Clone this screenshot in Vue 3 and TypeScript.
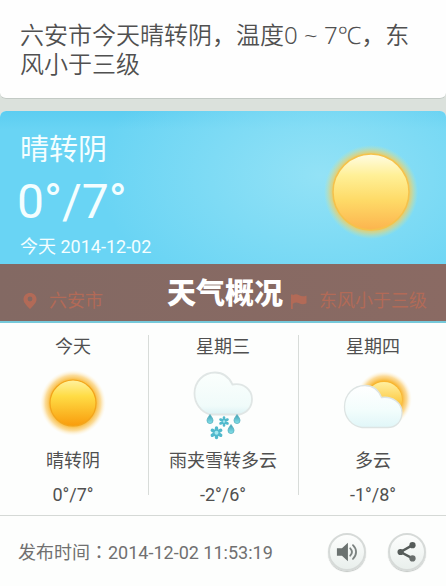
<script setup lang="ts">
type Sky = 'sun' | 'sleet' | 'cloudy'

interface Forecast {
  day: string
  sky: Sky
  text: string
  range: string
}

const summary = '六安市今天晴转阴，温度0 ~ 7℃，东风小于三级'

const forecasts: Forecast[] = [
  { day: '今天', sky: 'sun', text: '晴转阴', range: '0°/7°' },
  { day: '星期三', sky: 'sleet', text: '雨夹雪转多云', range: '-2°/6°' },
  { day: '星期四', sky: 'cloudy', text: '多云', range: '-1°/8°' },
]
</script>

<template>
  <main class="page">
    <p class="summary">{{ summary }}</p>

    <article class="card">
      <section class="hero">
        <div class="now">
          <h2 class="now-text">晴转阴</h2>
          <p class="now-range">0°/7°</p>
          <p class="now-date">今天 2014-12-02</p>
        </div>
        <svg class="hero-sun" viewBox="0 0 100 100" aria-hidden="true">
          <defs>
            <radialGradient id="heroGlow">
              <stop offset="0.76" stop-color="#f2c748" />
              <stop offset="0.86" stop-color="#e5d276" stop-opacity="0.75" />
              <stop offset="1" stop-color="#c9e6a8" stop-opacity="0" />
            </radialGradient>
            <linearGradient id="heroDisc" x1="0" y1="0" x2="0" y2="1">
              <stop offset="0" stop-color="#fffce4" />
              <stop offset="0.28" stop-color="#fff097" />
              <stop offset="0.6" stop-color="#fedb68" />
              <stop offset="1" stop-color="#fcb44e" />
            </linearGradient>
          </defs>
          <circle cx="50" cy="50" r="47" fill="url(#heroGlow)" />
          <circle cx="50" cy="50" r="38" fill="url(#heroDisc)" stroke="#f5c24c" stroke-width="1.500" />
        </svg>
      </section>

      <header class="band">
        <p class="place">
          <svg class="pin" viewBox="0 0 14 16" aria-hidden="true">
            <path
              fill="currentColor"
              fill-rule="evenodd"
              d="M7 0C3.300 0 .5 2.700.5 6.200.5 9.500 3.500 12.500 7 16c3.500-3.500 6.500-6.500 6.500-9.800C13.500 2.700 10.700 0 7 0Zm0 3.600a2.400 2.400 0 1 1 0 4.800 2.400 2.400 0 0 1 0-4.800Z"
            />
          </svg>
          六安市
        </p>
        <h1 class="title">天气概况</h1>
        <p class="wind">
          <svg class="flag" viewBox="0 0 16 16" aria-hidden="true">
            <path
              fill="currentColor"
              d="M0 1.500h1.800v.8C4 .8 6 .9 8.200 2.200c2.300 1.300 4.600 1.400 7.300.2v7.900c-2.700 1.400-5 1.300-7.300 0-2.200-1.200-4.200-1.200-6.400.4V16H0Z"
            />
          </svg>
          东风小于三级
        </p>
      </header>

      <ul class="days">
        <li v-for="f in forecasts" :key="f.day" class="day">
          <h3 class="day-name">{{ f.day }}</h3>

          <svg v-if="f.sky === 'sun'" class="sky" viewBox="0 0 80 80" aria-hidden="true">
            <defs>
              <radialGradient id="sunGlow">
                <stop offset="0.68" stop-color="#f8b52d" />
                <stop offset="0.84" stop-color="#fbd27c" stop-opacity="0.75" />
                <stop offset="1" stop-color="#fff5dc" stop-opacity="0" />
              </radialGradient>
              <linearGradient id="sunDisc" x1="0" y1="0" x2="0" y2="1">
                <stop offset="0" stop-color="#fff2a0" />
                <stop offset="0.35" stop-color="#ffdc45" />
                <stop offset="1" stop-color="#f99c0c" />
              </linearGradient>
            </defs>
            <circle cx="40" cy="40" r="33" fill="url(#sunGlow)" />
            <circle cx="40" cy="40" r="23" fill="url(#sunDisc)" stroke="#f3a51c" stroke-width="1.200" />
          </svg>

          <svg v-else-if="f.sky === 'sleet'" class="sky" viewBox="0 0 80 80" aria-hidden="true">
            <defs>
              <linearGradient id="sleetCloud" x1="0" y1="0" x2="0" y2="1">
                <stop offset="0" stop-color="#fbfffd" />
                <stop offset="0.8" stop-color="#f0fbfa" />
                <stop offset="1" stop-color="#dcf2f4" />
              </linearGradient>
              <linearGradient id="dropFill" x1="0" y1="0" x2="0" y2="1">
                <stop offset="0" stop-color="#3f9fb3" />
                <stop offset="1" stop-color="#86e3ec" />
              </linearGradient>
            </defs>
            <path
              fill="url(#sleetCloud)"
              stroke="#e0e6e5"
              stroke-width="1.800"
              d="M27 51.500C17.500 48.500 11.500 40 11.500 30.500 11.500 18.500 20.500 9.500 32 9.500c7.800 0 14 4.500 17.500 12C60.500 19.500 69 26.500 69 36c0 8-5 14-12.500 15.500Z"
            />
            <g fill="url(#dropFill)" stroke="#4fabb9" stroke-width="0.700">
              <path d="M27 51.500c2 2.800 3 4.500 3 6.100a3 3 0 0 1-6 0c0-1.600 1-3.300 3-6.100Z" />
              <path d="M54 51.500c2 2.800 3 4.500 3 6.100a3 3 0 0 1-6 0c0-1.600 1-3.300 3-6.100Z" />
              <path d="M48 61.500c2 2.800 3 4.500 3 6.100a3 3 0 0 1-6 0c0-1.600 1-3.300 3-6.100Z" />
            </g>
            <g stroke="#51b9cc" stroke-linecap="round">
              <path stroke-width="2.600" d="M41 54.500v8M37.500 56.500l7 4M44.500 56.500l-7 4" />
              <path stroke-width="3.400" d="M33.500 65v9.500M29.300 67.300l8.400 5M37.700 67.300l-8.400 5" />
            </g>
            <circle cx="33.500" cy="69.800" r="2" fill="#a5e8ef" />
            <circle cx="41" cy="58.500" r="1.200" fill="#a5e8ef" />
          </svg>

          <svg v-else class="sky" viewBox="0 0 80 80" aria-hidden="true">
            <defs>
              <radialGradient id="peekGlow">
                <stop offset="0.64" stop-color="#f8b52f" />
                <stop offset="0.82" stop-color="#fbd07a" stop-opacity="0.75" />
                <stop offset="1" stop-color="#fff5dc" stop-opacity="0" />
              </radialGradient>
              <linearGradient id="peekDisc" x1="0" y1="0" x2="0" y2="1">
                <stop offset="0" stop-color="#fff0a0" />
                <stop offset="0.5" stop-color="#fdcf50" />
                <stop offset="1" stop-color="#f6a42b" />
              </linearGradient>
              <linearGradient id="peekCloud" x1="0" y1="0" x2="0" y2="1">
                <stop offset="0" stop-color="#ffffff" />
                <stop offset="0.6" stop-color="#f2fdfc" />
                <stop offset="1" stop-color="#e0f6f8" />
              </linearGradient>
            </defs>
            <circle cx="51" cy="36" r="28" fill="url(#peekGlow)" />
            <circle cx="51" cy="37" r="18" fill="url(#peekDisc)" />
            <path
              fill="url(#peekCloud)"
              stroke="#dde4e3"
              stroke-width="1.300"
              d="M29 64.500C18.500 63 11.500 54.500 11.500 44 11.500 31.500 20.500 22.500 32 22.500c7.500 0 13.500 4.500 16.500 12C59.500 33 69 40 69 49.500c0 8.500-5.500 15-14.500 15Z"
            />
          </svg>

          <p class="day-text">{{ f.text }}</p>
          <p class="day-range">{{ f.range }}</p>
        </li>
      </ul>

      <footer class="foot">
        <p class="published">发布时间<span class="colon">：</span>2014-12-02 11:53:19</p>
        <button class="round" type="button" aria-label="播报">
          <svg class="glyph" viewBox="0 0 24 24" aria-hidden="true">
            <path fill="#6b7270" d="M1 8h5.500L13 2v20l-6.500-6H1Z" />
            <path
              fill="none"
              stroke="#7b8280"
              stroke-width="2"
              stroke-linecap="round"
              d="M15.500 8c2.300 2.400 2.300 5.600 0 8M18.500 4.500c4.500 4.300 4.500 10.700 0 15"
            />
          </svg>
        </button>
        <button class="round" type="button" aria-label="分享">
          <svg class="glyph" viewBox="0 0 24 24" aria-hidden="true">
            <path fill="none" stroke="#565c5a" stroke-width="2.600" d="M18 4.500 5 12l13 7" />
            <circle cx="18" cy="4.500" r="3.400" fill="#565c5a" />
            <circle cx="5" cy="12" r="3.400" fill="#565c5a" />
            <circle cx="18" cy="19" r="3.400" fill="#686e6c" />
          </svg>
        </button>
      </footer>
    </article>
  </main>
</template>

<style>
body {
  background: #dbe1dc;
}
</style>

<style scoped>
.page {
  display: flex;
  flex-direction: column;
  gap: 12px;
  min-height: 100vh;
  color: #505050;
  font-family: Roboto, 'Noto Sans CJK SC', sans-serif;
  font-size: 18px;
  line-height: 24px;
}

p,
h1,
h2,
h3,
ul {
  margin: 0;
  padding: 0;
  font-size: 18px;
  font-weight: 400;
}

.summary {
  padding: 20px;
  border-bottom: 1px solid #c3cac5;
  border-radius: 0 0 6px 6px;
  background: #fefefe;
  font-family: 'Noto Sans', 'Noto Sans CJK SC', sans-serif;
  font-size: 24px;
  font-weight: 350;
  line-height: 29px;
}

.card {
  display: flex;
  flex: 1;
  flex-direction: column;
  overflow: hidden;
  border-radius: 6px 6px 0 0;
  background: #fdfefd;
}

.hero {
  display: flex;
  align-items: center;
  justify-content: space-between;
  padding: 20px 25px 5px 20px;
  background:
    radial-gradient(ellipse 50% 90% at 72% 42%, #93e2f6, rgba(147, 226, 246, 0)),
    linear-gradient(#5ccdf1, #69d4f4 12%, #69d4f4);
  color: #f4feff;
}

.now-text {
  font-size: 29px;
  line-height: 38px;
}

.now-range {
  margin-left: -3px;
  font-size: 48px;
  line-height: 66px;
}

.now-date {
  line-height: 24px;
}

.hero-sun {
  width: 100px;
  height: 100px;
  margin-bottom: 6px;
}

.band {
  display: grid;
  grid-template-columns: 1fr auto 1fr;
  align-items: center;
  padding: 0 19px 0 23px;
  border-bottom: 2px solid #76c9da;
  background: linear-gradient(90deg, #836963, #8a6a63);
  color: #b26a57;
}

.title {
  padding-top: 4px;
  color: #fff;
  font-size: 29px;
  font-weight: 900;
  line-height: 53px;
}

.place,
.wind {
  display: flex;
  align-items: center;
  gap: 12px;
  padding-top: 16px;
  line-height: 41px;
}

.wind {
  justify-content: flex-end;
}

.pin {
  width: 14px;
  height: 16px;
}

.flag {
  width: 16px;
  height: 16px;
}

.days {
  display: grid;
  grid-template-columns: repeat(3, 1fr);
  margin: 0 -2px;
  padding: 12px 0 8px;
  border-bottom: 1px solid #d5d9d6;
  list-style: none;
}

.day {
  display: flex;
  flex-direction: column;
  align-items: center;
}

.day + .day {
  background: linear-gradient(#d8dcd9, #d8dcd9) 0 0 / 1px calc(100% - 12px) no-repeat;
}

.sky {
  width: 80px;
  height: 80px;
  margin: 4px 0 6px;
}

.day-range {
  padding-top: 10px;
}

.foot {
  display: flex;
  flex: 1;
  align-items: center;
  gap: 22px;
  padding: 2px 20px 0 18px;
  color: #707070;
}

.published {
  flex: 1;
}

.colon {
  font-family: 'Noto Sans CJK TC', sans-serif;
}

.round {
  display: grid;
  place-items: center;
  width: 38px;
  height: 38px;
  padding: 0;
  border: 2px solid #d6dad8;
  border-radius: 50%;
  background: linear-gradient(#fdfefd, #e9efec);
  box-shadow: 0 1px 1px #c0c5c2;
}

.glyph {
  width: 22px;
  height: 22px;
}
</style>
